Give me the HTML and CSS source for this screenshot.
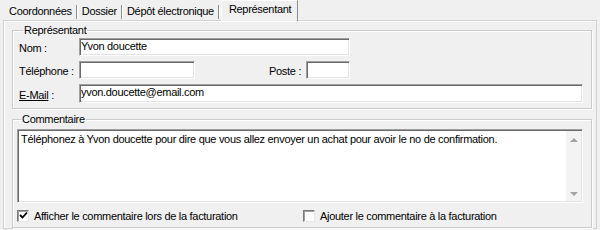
FILE: index.html
```html
<!DOCTYPE html>
<html>
  <head>
    <meta charset="utf-8">
    <title>Représentant</title>
    <link rel="stylesheet" href="styles.css">
  </head>
  <body>
    <div class="tabs">
        <span class="tab">Coordonnées</span>
        <span class="tab">Dossier</span>
        <span class="tab">Dépôt électronique</span>
        <span class="tab active">Représentant</span>
    </div>
    <section class="page">
        <fieldset class="group rep">
            <legend>Représentant</legend>
            <div class="row">
                <label class="caption">Nom :</label>
                <div class="edit nom">Yvon doucette</div>
            </div>
            <div class="row">
                <label class="caption">Téléphone :</label>
                <div class="edit tel"></div>
                <label class="poste">Poste :</label>
                <div class="edit ext"></div>
            </div>
            <div class="row last">
                <label class="caption"><u>E-Mail</u> :</label>
                <div class="edit mail">yvon.doucette@email.com</div>
            </div>
        </fieldset>
        <fieldset class="group comment">
            <legend>Commentaire</legend>
            <div class="memo">
                <div class="memoText">Téléphonez à Yvon doucette pour dire que vous allez envoyer un achat pour avoir le no de confirmation.</div>
                <div class="scroll">
                    <span class="arrow up"></span>
                    <span class="arrow down"></span>
                </div>
            </div>
            <div class="checks">
                <label class="check">
                    <span class="box">
                        <svg width="9" height="9" viewBox="0 0 9 9"><path d="M1 4 L3.5 6.5 L8 1.5" fill="none" stroke="#000" stroke-width="1.8"/></svg>
                    </span>
                    Afficher le commentaire lors de la facturation
                </label>
                <label class="check">
                    <span class="box"></span>
                    Ajouter le commentaire à la facturation
                </label>
            </div>
        </fieldset>
    </section>
  </body>
</html>
```

FILE: styles.css
```css
body {
    margin: 0;
    background: #f0f0f0;
    font-family: "Liberation Sans", Arial, sans-serif;
    font-size: 11px;
    letter-spacing: -0.3px;
    color: #000;
    width: 600px;
    height: 230px;
    overflow: hidden;
}
.tabs {
    display: flex;
    height: 20px;
    padding-left: 4px;
    align-items: flex-end;
}
.tab {
    line-height: 13px;
    height: 13px;
    padding: 0 4px 1px 5px;
    margin-bottom: 1px;
    border-right: 1px solid #8c8c8c;
    box-shadow: 1px 0 0 #fff;
}
.tab.active {
    height: 18px;
    padding: 2px 6px 0 7px;
    margin: 0 0 -1px 2px;
    line-height: 13px;
    border-left: 1px solid #fff;
    border-top: 1px solid #fff;
    border-right: 1px solid #8c8c8c;
    background: #f0f0f0;
    position: relative;
    box-shadow: none;
}
.page {
    margin: 0 3px 0 3px;
    height: 207px;
    border: 1px solid #d2d2d2;
    box-shadow: inset 1px 1px 0 #fff;
    padding: 0 4px 0 8px;
}
.group {
    margin: 3px 0 0 0;
    padding: 0 8px 5px 6px;
    border: 1px solid #cacaca;
    box-shadow: inset 1px 1px 0 #fff, 1px 1px 0 #fff;
}
.group legend {
    padding: 0 1px;
    margin-left: 4px;
    line-height: 13px;
}
.row {
    display: flex;
    align-items: center;
    margin-top: 1px;
    margin-bottom: 5px;
}
.row.last {
    margin-bottom: 0;
}
.caption {
    width: 60px;
    padding-top: 2px;
}
.poste {
    margin-left: 74px;
    width: 37px;
    padding-top: 2px;
}
.edit {
    box-sizing: border-box;
    height: 18px;
    padding: 1px 2px 0 1px;
    line-height: 13px;
    background: #fff;
    border: 1px solid;
    border-color: #a0a0a0 #fff #fff #a0a0a0;
    box-shadow: inset 1px 1px 0 #6a6a6a, inset -1px -1px 0 #e3e3e3;
}
.nom {
    width: 271px;
}
.tel {
    width: 116px;
}
.ext {
    width: 44px;
}
.mail {
    flex: 1;
    height: 19px;
}
.comment {
    margin-top: 4px;
    padding: 3px 8px 5px 4px;
}
.memo {
    display: flex;
    height: 74px;
    box-sizing: border-box;
    background: #fff;
    border: 1px solid;
    border-color: #a0a0a0 #fff #fff #a0a0a0;
    box-shadow: inset 1px 1px 0 #6a6a6a, inset -1px -1px 0 #e3e3e3;
}
.memoText {
    flex: 1;
    padding: 3px 3px 0 3px;
    line-height: 13px;
}
.scroll {
    width: 15px;
    margin: 1px 1px 1px 0;
    background: #f3f3f3;
    display: flex;
    flex-direction: column;
    justify-content: space-between;
    align-items: center;
    padding: 7px 0 5px;
}
.arrow {
    width: 0;
    height: 0;
    border-left: 4px solid transparent;
    border-right: 4px solid transparent;
}
.arrow.up {
    border-bottom: 4px solid #a3a3a3;
}
.arrow.down {
    border-top: 4px solid #a3a3a3;
}
.checks {
    display: grid;
    grid-template-columns: 286px 1fr;
    margin-top: 6px;
}
.check {
    display: flex;
    align-items: center;
    gap: 5px;
    height: 13px;
}
.box {
    box-sizing: border-box;
    width: 12px;
    height: 12px;
    background: #fff;
    border: 1px solid;
    border-color: #7a7a7a #e8e8e8 #e8e8e8 #7a7a7a;
    box-shadow: inset 1px 1px 0 #a0a0a0;
    display: flex;
    align-items: center;
    justify-content: center;
}
.box svg {
    display: block;
}
```
